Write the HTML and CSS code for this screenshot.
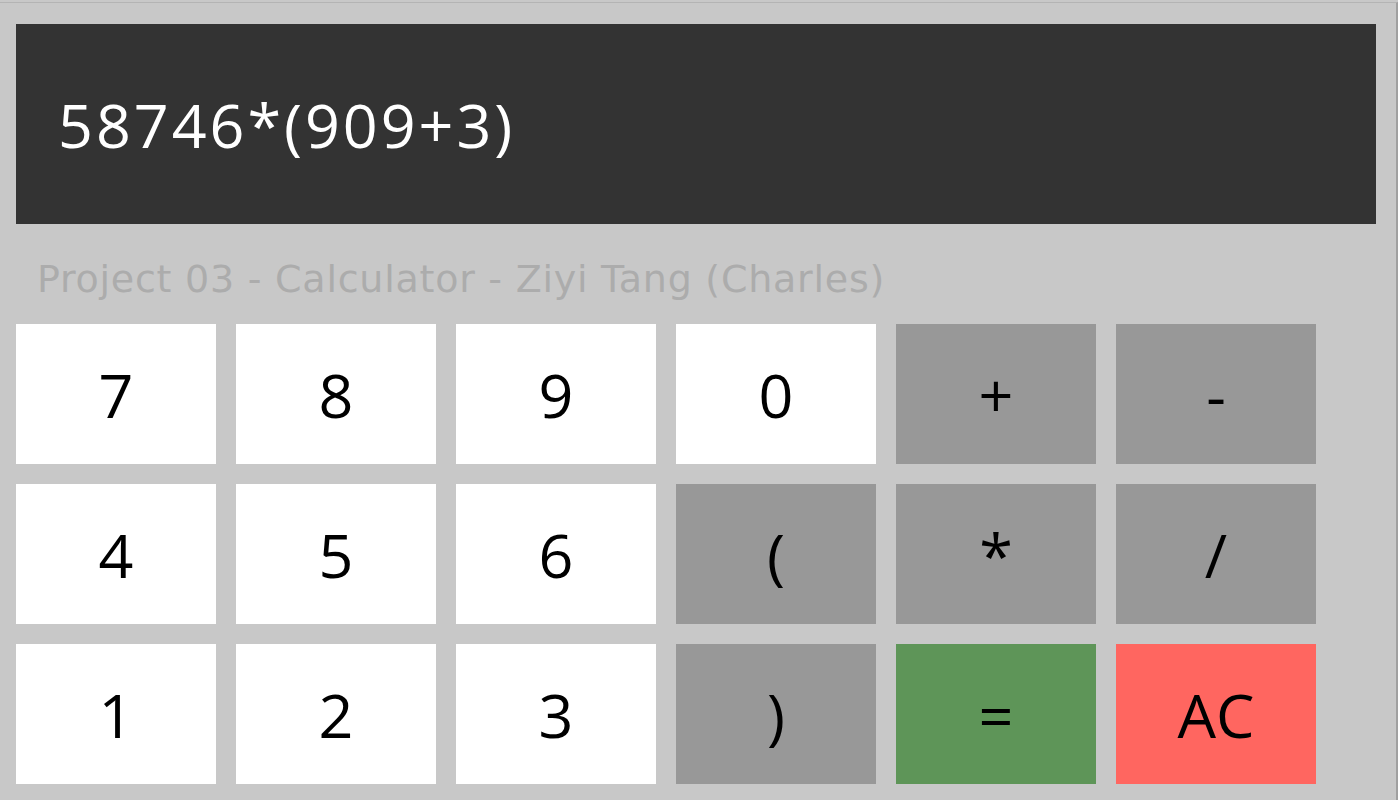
FILE: index.html
```html
<!DOCTYPE html>
<html>
<head>
<meta charset="utf-8">
<link rel="stylesheet" href="styles.css">
</head>
<body>
<div class="window">
  <div class="display">58746*(909+3)</div>
  <div class="title">Project 03 - Calculator - Ziyi Tang (Charles)</div>
  <div class="keys">
    <button class="key num">7</button>
    <button class="key num">8</button>
    <button class="key num">9</button>
    <button class="key num">0</button>
    <button class="key op">+</button>
    <button class="key op">-</button>
    <button class="key num">4</button>
    <button class="key num">5</button>
    <button class="key num">6</button>
    <button class="key op">(</button>
    <button class="key op">*</button>
    <button class="key op">/</button>
    <button class="key num">1</button>
    <button class="key num">2</button>
    <button class="key num">3</button>
    <button class="key op">)</button>
    <button class="key eq">=</button>
    <button class="key ac">AC</button>
  </div>
</div>
</body>
</html>
```

FILE: styles.css
```css
html, body {
  margin: 0;
  padding: 0;
  background: #c8c8c8;
  height: 800px;
  overflow: hidden;
}
.window {
  box-sizing: border-box;
  width: 1398px;
  height: 800px;
  border-top: 1px solid #b4b4b4;
  border-right: 2px solid #a0a0a0;
  margin-top: 2px;
  padding: 21px 0 0 16px;
  font-family: "Open Sans", "DejaVu Sans", sans-serif;
}
.display {
  width: 1360px;
  height: 200px;
  box-sizing: border-box;
  background: #333333;
  color: #ffffff;
  font-size: 61px;
  letter-spacing: 3px;
  display: flex;
  align-items: center;
  padding-left: 42px;
}
.title {
  height: 100px;
  display: flex;
  align-items: center;
  padding-left: 21px;
  padding-top: 10px;
  color: #acacac;
  font-family: "DejaVu Sans", "Open Sans", sans-serif;
  font-size: 38px;
  letter-spacing: 0.75px;
  box-sizing: border-box;
}
.keys {
  display: grid;
  grid-template-columns: repeat(6, 200px);
  grid-auto-rows: 140px;
  gap: 20px;
}
.key {
  border: none;
  margin: 0;
  padding: 0;
  font-family: "Open Sans", "DejaVu Sans", sans-serif;
  font-size: 61px;
  color: #000000;
  display: flex;
  align-items: center;
  justify-content: center;
}
.num { background: #ffffff; }
.op { background: #989898; }
.eq { background: #5e9558; }
.ac { background: #ff6660; }
```
